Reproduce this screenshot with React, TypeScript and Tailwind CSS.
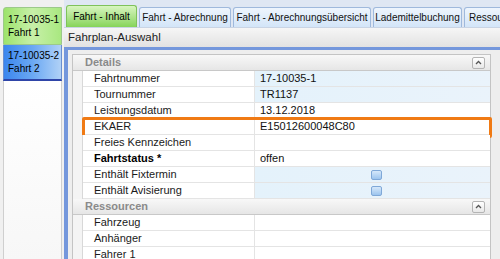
import React from "react";

type Row = { label: string; value?: string; bold?: boolean; blue?: boolean; check?: boolean; hl?: boolean };

const details: Row[] = [
  { label: "Fahrtnummer", value: "17-10035-1", blue: true },
  { label: "Tournummer", value: "TR1137", blue: true },
  { label: "Leistungsdatum", value: "13.12.2018" },
  { label: "EKAER", value: "E15012600048C80", hl: true },
  { label: "Freies Kennzeichen" },
  { label: "Fahrtstatus *", value: "offen", bold: true },
  { label: "Enthält Fixtermin", blue: true, check: true },
  { label: "Enthält Avisierung", blue: true, check: true },
];

const resources: Row[] = [{ label: "Fahrzeug" }, { label: "Anhänger" }, { label: "Fahrer 1" }];

function CollapseBtn() {
  return (
    <div className="w-[13px] h-[12px] border border-[#b4b4b4] rounded-[2px] bg-gradient-to-b from-white to-[#e8e8e8] flex items-center justify-center">
      <svg width="7" height="5" viewBox="0 0 7 5">
        <path d="M1 4 L3.5 1.5 L6 4" fill="none" stroke="#555" strokeWidth="1.3" />
      </svg>
    </div>
  );
}

function SectionHeader({ title }: { title: string }) {
  return (
    <div className="h-[16px] flex items-center justify-between pl-[12px] pr-[5px] bg-gradient-to-b from-[#f8f8f8] to-[#e6e6e6] border-b border-[#c8c8c8]">
      <span className="text-[11px] font-bold text-[#8a8a8a]">{title}</span>
      <CollapseBtn />
    </div>
  );
}

function PropRow({ r }: { r: Row }) {
  return (
    <div className="relative flex h-[16px] bg-white">
      <div className="w-[10px] shrink-0 bg-[#f4f4f4] border-r border-[#d8d8d8]" />
      <div className="w-[172px] shrink-0 flex items-center pl-[11px] border-b border-r border-[#e4e4e4] text-[11px]">
        <span className={r.bold ? "font-bold text-black" : "text-[#1a1a1a]"}>{r.label}</span>
      </div>
      <div
        className={`flex-1 flex items-center pl-[5px] border-b border-[#e4e4e4] text-[11px] text-[#111] ${
          r.blue ? "bg-gradient-to-r from-[#e4f2fb] to-[#eaf3fb]" : "bg-white"
        }`}
      >
        {r.check ? (
          <div className="ml-[111px] w-[11px] h-[10px] rounded-[2px] border border-[#7fa8d8] bg-gradient-to-b from-[#d6e8fa] to-[#9cc4ee]" />
        ) : (
          r.value
        )}
      </div>
      {r.hl && (
        <div className="absolute left-[9px] right-[-2px] top-[-2px] bottom-[-3px] border-[3px] border-[#f07a14] rounded-[2px]" />
      )}
    </div>
  );
}

function Tab({ label, w, active }: { label: string; w: string; active?: boolean }) {
  return (
    <div
      className={`shrink-0 flex items-center justify-center mr-[2px] border border-b-0 rounded-t-[3px] text-[10px] whitespace-nowrap overflow-hidden ${w} ${
        active
          ? "h-[22px] bg-gradient-to-b from-[#d8f5bf] to-[#86d458] border-[#7fc25a] text-black"
          : "h-[20px] bg-gradient-to-b from-[#eef5fd] to-[#d3e5f8] border-[#9fb9dc] text-[#111]"
      }`}
    >
      {label}
    </div>
  );
}

export default function App() {
  return (
    <div
      className="w-[500px] h-[259px] overflow-hidden flex bg-[#dfe7f3]"
      style={{ fontFamily: "'Liberation Sans', Arial, sans-serif" }}
    >
      {/* left list */}
      <div className="w-[64px] shrink-0 h-full flex flex-col pt-[7px] pl-[3px] pr-[2px] bg-[#f0f0f0]">
        <div className="h-[38px] rounded-tl-[3px] border border-[#9cc98a] bg-gradient-to-r from-[#9de36b] via-[#c7f0a8] to-[#a9e880] flex flex-col justify-center pl-[4px] text-[10px] leading-[13px] text-black whitespace-nowrap">
          <span>17-10035-1</span>
          <span>Fahrt 1</span>
        </div>
        <div className="h-[36px] border-x border-[#6b8fd0] border-b-2 border-b-[#2f45a8] bg-gradient-to-r from-[#3b86ee] via-[#6aa8f3] to-[#b0d1f6] flex flex-col justify-center pl-[4px] text-[10px] leading-[13px] text-black whitespace-nowrap">
          <span>17-10035-2</span>
          <span>Fahrt 2</span>
        </div>
        <div className="flex-1 border-x border-[#cfcfcf] bg-gradient-to-b from-white to-[#f7f7f7]" />
      </div>

      {/* main */}
      <div className="flex-1 min-w-0 h-full flex flex-col">
        <div className="h-[27px] shrink-0 pl-[2px] flex items-end overflow-hidden">
          <div className="flex items-end">
            <Tab label="Fahrt - Inhalt" w="w-[71px]" active />
            <Tab label="Fahrt - Abrechnung" w="w-[92px]" />
            <Tab label="Fahrt - Abrechnungsübersicht" w="w-[138px]" />
            <Tab label="Lademittelbuchung" w="w-[89px]" />
            <Tab label="Ressourcen" w="w-[60px] !justify-start pl-[4px]" />
          </div>
        </div>
        <div className="h-[20px] shrink-0 flex items-center pl-[4px] bg-gradient-to-b from-[#f6f6f6] to-[#e2e2e2] border-t border-[#c9d4e4] text-[11.5px] text-[#222]">
          Fahrplan-Auswahl
        </div>
        <div className="h-[3px] shrink-0 bg-[#7497dc]" />
        <div className="flex-1 flex min-h-0">
          <div className="w-[4px] bg-[#7497dc]" />
          <div className="flex-1 min-w-0 bg-[#eeeeee] pt-[4px] pl-[4px] pr-[9px]">
            <div className="h-full bg-white border-l border-t border-r border-[#c4c4c4]">
              <SectionHeader title="Details" />
              {details.map((r) => (
                <PropRow key={r.label} r={r} />
              ))}
              <SectionHeader title="Ressourcen" />
              {resources.map((r) => (
                <PropRow key={r.label} r={r} />
              ))}
            </div>
          </div>
        </div>
      </div>
    </div>
  );
}
